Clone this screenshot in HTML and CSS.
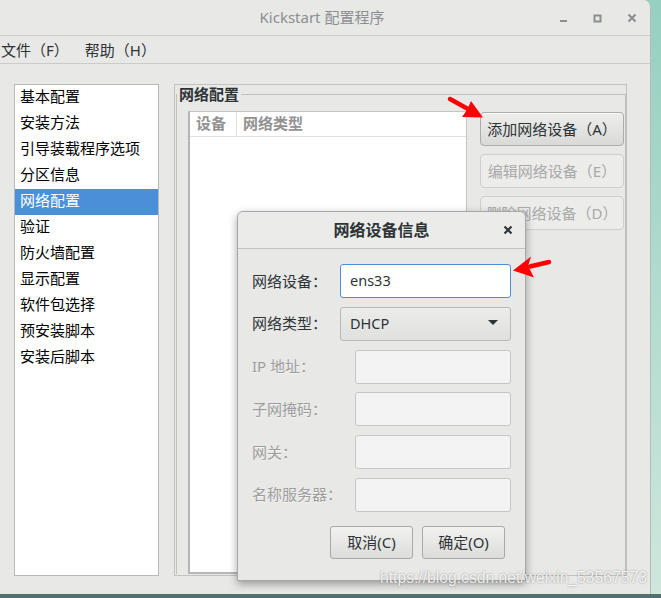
FILE: index.html
```html
<!DOCTYPE html>
<html lang="zh-CN">
<head>
<meta charset="utf-8">
<title>Kickstart 配置程序</title>
<link rel="stylesheet" href="styles.css">
</head>
<body>
<div class="window">
  <div class="titlebar">
    <span></span>
    <span class="title">Kickstart 配置程序</span>
    <div class="controls">
      <svg width="10" height="10" viewBox="0 0 10 10"><rect x="1" y="7" width="7" height="2" fill="#8b8e8f"/></svg>
      <svg width="10" height="10" viewBox="0 0 10 10"><rect x="1.5" y="2.5" width="6" height="6" fill="none" stroke="#8b8e8f" stroke-width="2"/></svg>
      <svg width="10" height="10" viewBox="0 0 10 10"><path d="M1.5 1.5L8.5 8.5M8.5 1.5L1.5 8.5" stroke="#8b8e8f" stroke-width="2"/></svg>
    </div>
  </div>
  <div class="menubar">
    <span>文件（F）</span>
    <span>帮助（H）</span>
  </div>
  <div class="content">
    <ul class="sidebar">
      <li>基本配置</li>
      <li>安装方法</li>
      <li>引导装载程序选项</li>
      <li>分区信息</li>
      <li class="selected">网络配置</li>
      <li>验证</li>
      <li>防火墙配置</li>
      <li>显示配置</li>
      <li>软件包选择</li>
      <li>预安装脚本</li>
      <li>安装后脚本</li>
    </ul>
    <div class="panel">
      <fieldset class="group">
        <legend>网络配置</legend>
        <div class="group-body">
          <div class="table">
            <div class="thead">
              <span class="th th-dev">设备</span>
              <span class="th">网络类型</span>
            </div>
          </div>
          <div class="actions">
            <div class="btn">添加网络设备（A）</div>
            <div class="btn disabled">编辑网络设备（E）</div>
            <div class="btn disabled">删除网络设备（D）</div>
          </div>
        </div>
      </fieldset>
    </div>
  </div>

  <div class="dialog">
    <div class="dlg-title">
      <span></span>
      <span class="dlg-name">网络设备信息</span>
      <svg class="dlg-close" width="10" height="10" viewBox="0 0 10 10"><path d="M1.5 1.5L8.5 8.5M8.5 1.5L1.5 8.5" stroke="#2e3436" stroke-width="2.2"/></svg>
    </div>
    <div class="dlg-body">
      <div class="row">
        <span class="lbl">网络设备<span class="colon">：</span></span>
        <div class="entry focus">ens33</div>
      </div>
      <div class="row">
        <span class="lbl">网络类型<span class="colon">：</span></span>
        <div class="combo"><span>DHCP</span><svg width="10" height="6" viewBox="0 0 10 6"><path d="M0 0H10L5 5Z" fill="#2e3436"/></svg></div>
      </div>
      <div class="row">
        <span class="lbl off">IP 地址<span class="colon">：</span></span>
        <div class="entry off"></div>
      </div>
      <div class="row">
        <span class="lbl off">子网掩码<span class="colon">：</span></span>
        <div class="entry off"></div>
      </div>
      <div class="row">
        <span class="lbl off">网关<span class="colon">：</span></span>
        <div class="entry off"></div>
      </div>
      <div class="row">
        <span class="lbl off">名称服务器<span class="colon">：</span></span>
        <div class="entry off"></div>
      </div>
      <div class="dlg-buttons">
        <div class="dbtn">取消(C)</div>
        <div class="dbtn">确定(O)</div>
      </div>
    </div>
  </div>

  <div class="watermark">https://blog.csdn.net/weixin_53567573</div>
</div>

<svg class="arrows" width="661" height="598" viewBox="0 0 661 598">
  <path d="M450 99 L468 109" stroke="#ff0000" stroke-width="4.5" stroke-linecap="round"/>
  <polygon points="483,117.5 462,117 467,110 471,101" fill="#ff0000"/>
  <path d="M549 262 L530 266.5" stroke="#ff0000" stroke-width="4.5" stroke-linecap="round"/>
  <polygon points="513,270.5 531,256.5 528,266 534,277.5" fill="#ff0000"/>
</svg>
</body>
</html>
```

FILE: styles.css
```css
* { box-sizing: border-box; }

html, body {
  margin: 0;
  padding: 0;
}

body {
  width: 661px;
  height: 598px;
  overflow: hidden;
  font-family: "Noto Sans", "Noto Sans CJK SC", sans-serif;
  color: #2e3436;
  background:
    linear-gradient(#52706f, #52706f) left bottom / 100% 4px no-repeat,
    linear-gradient(to bottom, #95d0c0, #cfe7dd);
}

.window {
  position: relative;
  width: 651px;
  height: 594px;
  background: #e8e8e7;
  border-right: 1px solid #b3bab8;
  border-top-right-radius: 7px;
  display: flex;
  flex-direction: column;
}

/* title bar */
.titlebar {
  height: 36px;
  flex: none;
  border-bottom: 1px solid #cbcbc9;
  display: grid;
  grid-template-columns: 1fr auto 1fr;
  align-items: center;
}
.title {
  font-size: 15px;
  color: #8b8e8f;
  margin-right: 6px;
  margin-top: -3px;
}
.controls {
  justify-self: end;
  display: flex;
  gap: 24px;
  padding-right: 13px;
  margin-top: 0;
}
.controls svg { display: block; }

/* menu */
.menubar {
  height: 28px;
  flex: none;
  border-bottom: 1px solid #cbcbc9;
  display: flex;
  align-items: center;
  gap: 16px;
  padding-left: 1px;
  font-size: 15px;
  color: #2e3436;
}
.menubar span { margin-top: -1px; }

/* content */
.content {
  display: flex;
  padding: 20px 0 0 14px;
}

.sidebar {
  list-style: none;
  margin: 0;
  padding: 0;
  width: 145px;
  height: 492px;
  background: #fff;
  border: 1px solid #b8b8b6;
}
.sidebar li {
  height: 26px;
  line-height: 23px;
  padding-left: 5px;
  font-size: 15px;
  color: #000;
}
.sidebar li.selected {
  background: #4a90d9;
  color: #fff;
}

.panel {
  margin-left: 15px;
  width: 453px;
  height: 492px;
  border: 1px solid #c2c2c0;
}

.group {
  margin: 1px 0 0 1px;
  padding: 0;
  border: 1px solid #c0c0be;
  border-bottom: none;
  min-width: 0;
}
.group legend {
  padding: 0 2px;
  font-size: 15px;
  line-height: 16px;
  font-weight: bold;
  color: #2e3436;
}

.group-body {
  display: flex;
  gap: 13px;
  margin: 9px 1px 0 11px;
  height: 463px;
}

.table {
  width: 279px;
  background: #fff;
  border: 1px solid #c4c4c4;
  border-left: 2px solid #b6b6b6;
  border-bottom: 2px solid #b6b6b6;
}
.thead {
  display: flex;
  height: 25px;
  border-bottom: 1px solid #dfdfdf;
}
.th {
  font-size: 15px;
  font-weight: bold;
  color: #929292;
  line-height: 22px;
  padding-left: 6px;
}
.th-dev {
  width: 47px;
  border-right: 1px solid #e0e0e0;
}

.actions {
  display: flex;
  flex-direction: column;
  gap: 8px;
  margin-top: 1px;
  width: 144px;
}
.btn {
  height: 34px;
  display: flex;
  align-items: center;
  justify-content: center;
  padding-bottom: 2px;
  font-size: 15px;
  color: #2e3436;
  border: 1px solid #acacac;
  border-radius: 4px;
  background: linear-gradient(to bottom, #eeeeed, #d9d9d8);
  box-shadow: inset 0 1px #f8f8f8;
}
.btn.disabled {
  color: #a9a9a9;
  border-color: #cfcfcf;
  background: #ececeb;
  box-shadow: none;
}

/* dialog */
.dialog {
  position: absolute;
  left: 237px;
  top: 211px;
  width: 289px;
  height: 370px;
  background: #e8e8e7;
  border: 1px solid #a7a7a7;
  border-radius: 6px 6px 0 0;
  box-shadow: 0 3px 9px rgba(0, 0, 0, 0.35);
}
.dlg-title {
  height: 37px;
  border-bottom: 1px solid #c3c3c1;
  display: grid;
  grid-template-columns: 34px 1fr 34px;
  align-items: center;
  background: #ebebea;
  border-radius: 6px 6px 0 0;
}
.dlg-name {
  text-align: center;
  font-size: 16px;
  font-weight: bold;
  color: #2e3436;
  margin-top: -3px;
}
.dlg-close {
  justify-self: center;
  display: block;
  margin-top: -1px;
}

.dlg-body {
  padding: 15px 14px 0 14px;
  display: flex;
  flex-direction: column;
  gap: 8.8px;
}
.row {
  height: 34px;
  display: flex;
  align-items: center;
  justify-content: space-between;
}
.lbl {
  font-size: 15px;
  color: #2e3436;
  margin-top: -2px;
}
.colon {
  font-family: "Noto Sans CJK TC", sans-serif;
}
.lbl.off {
  color: #9d9d9d;
  text-shadow: 0 1px 0 rgba(255, 255, 255, 0.6);
}
.entry {
  height: 34px;
  width: 156px;
  border: 1px solid #c6c6c6;
  border-radius: 3px;
  background: #f3f3f3;
  font-size: 14.5px;
  line-height: 31px;
  padding-left: 9px;
  color: #2e3436;
}
.entry.focus {
  width: 171px;
  background: #fff;
  border-color: #4a90d9;
}
.combo {
  width: 171px;
  height: 34px;
  border: 1px solid #b9b9b9;
  border-radius: 3px;
  background: linear-gradient(to bottom, #ececeb, #e0e0df);
  display: flex;
  align-items: center;
  justify-content: space-between;
  padding: 0 12px 1px 9px;
  font-size: 14.5px;
  color: #2e3436;
}
.combo svg { display: block; }

.dlg-buttons {
  display: flex;
  justify-content: flex-end;
  gap: 9px;
  margin-top: 5px;
  padding-right: 6px;
}
.dbtn {
  width: 83px;
  height: 33px;
  display: flex;
  align-items: center;
  justify-content: center;
  padding-bottom: 2px;
  font-size: 15px;
  color: #2e3436;
  border: 1px solid #a9a9a9;
  border-radius: 3px;
  background: linear-gradient(to bottom, #f2f2f1, #dcdcdb);
}

.watermark {
  position: absolute;
  left: 380px;
  top: 569px;
  font-family: "Liberation Sans", sans-serif;
  font-size: 15.7px;
  white-space: nowrap;
  color: rgba(255, 255, 255, 0.85);
  text-shadow: 0 0 2px rgba(0, 0, 0, 0.4);
}

.arrows {
  position: absolute;
  left: 0;
  top: 0;
  pointer-events: none;
}
```
